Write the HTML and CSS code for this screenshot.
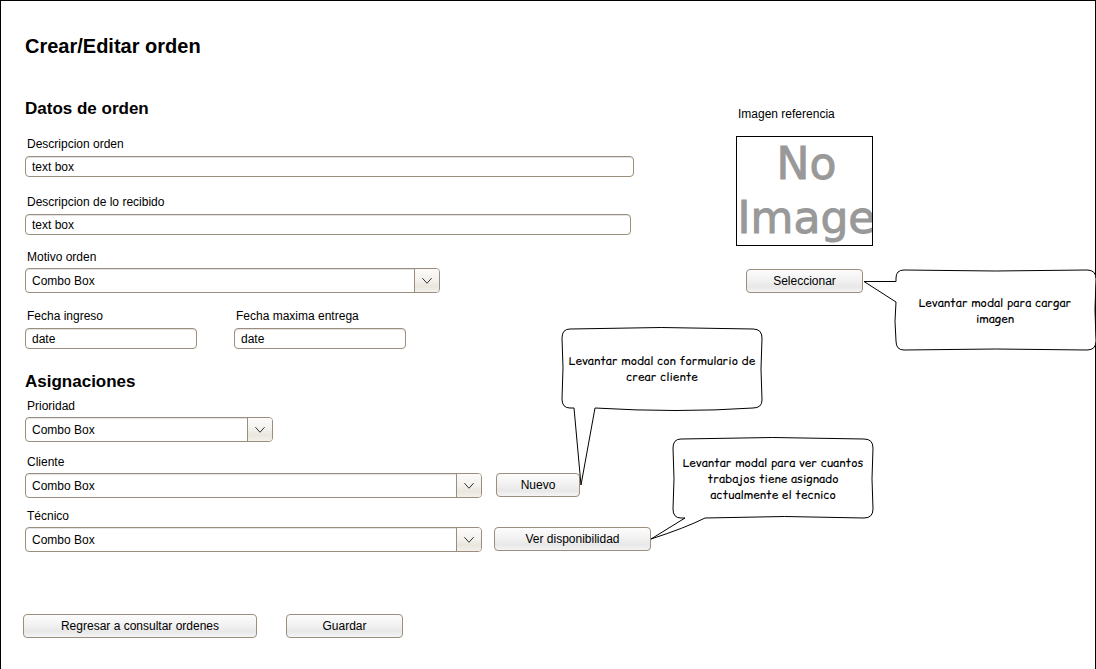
FILE: index.html
```html
<!DOCTYPE html>
<html lang="es">
<head>
<meta charset="utf-8">
<title>Crear/Editar orden</title>
<meta name="viewport" content="width=device-width, initial-scale=1">
<link rel="stylesheet" href="styles.css">
</head>
<body>
<main class="page">
  <h1 class="page-title">Crear/Editar orden</h1>
  <form class="order-form">
    <div class="columns">
      <div class="fields">
        <section class="order-data">
          <h2 class="section-title">Datos de orden</h2>
          <div class="field field-first">
            <label for="descripcion">Descripcion orden</label>
            <input class="text-input" id="descripcion" type="text" value="text box">
          </div>
          <div class="field field-received">
            <label for="recibido">Descripcion de lo recibido</label>
            <input class="text-input" id="recibido" type="text" value="text box">
          </div>
          <div class="field field-combo field-reason">
            <label for="motivo">Motivo orden</label>
            <span class="combo">
              <select id="motivo"><option>Combo Box</option></select>
              <svg class="combo-arrow" viewBox="0 0 25 25" aria-hidden="true"><path d="M7.500 10l5 5.500 5-5.500"/></svg>
            </span>
          </div>
          <div class="dates">
            <div class="field">
              <label for="ingreso">Fecha ingreso</label>
              <input class="text-input" id="ingreso" type="text" value="date">
            </div>
            <div class="field">
              <label for="entrega">Fecha maxima entrega</label>
              <input class="text-input" id="entrega" type="text" value="date">
            </div>
          </div>
        </section>
        <section class="assignments">
          <h2 class="section-title">Asignaciones</h2>
          <div class="field field-combo field-priority">
            <label for="prioridad">Prioridad</label>
            <span class="combo">
              <select id="prioridad"><option>Combo Box</option></select>
              <svg class="combo-arrow" viewBox="0 0 25 25" aria-hidden="true"><path d="M7.500 10l5 5.500 5-5.500"/></svg>
            </span>
          </div>
          <div class="field field-combo field-client">
            <label for="cliente">Cliente</label>
            <div class="action-row">
              <span class="combo">
                <select id="cliente"><option>Combo Box</option></select>
                <svg class="combo-arrow" viewBox="0 0 25 25" aria-hidden="true"><path d="M7.500 10l5 5.500 5-5.500"/></svg>
              </span>
              <div class="anchor">
                <button class="button button-small" type="button">Nuevo</button>
                <div class="callout callout-client">
                  <svg viewBox="0 0 204 160" aria-hidden="true"><path d="M10 2Q101-1 193 2Q202 2 202 11Q200 42 202 73Q202 81 193 81Q118 86 35 81L21 158L14 81H10Q2 81 2 72Q4 40 2 11Q2 2 10 2Z"/></svg>
                  <p>Levantar modal con formulario de<br>crear cliente</p>
                </div>
              </div>
            </div>
          </div>
          <div class="field field-combo field-technician">
            <label for="tecnico">Técnico</label>
            <div class="action-row">
              <span class="combo">
                <select id="tecnico"><option>Combo Box</option></select>
                <svg class="combo-arrow" viewBox="0 0 25 25" aria-hidden="true"><path d="M7.500 10l5 5.500 5-5.500"/></svg>
              </span>
              <div class="anchor">
                <button class="button button-wide" type="button">Ver disponibilidad</button>
                <div class="callout callout-technician">
                  <svg viewBox="0 0 224 104" aria-hidden="true"><path d="M30 2Q122-1 213 2Q222 2 222 11Q220 42 222 72Q222 81 213 81Q134 78 54 81Q34 91 0 102L34 81H30Q22 81 22 72Q24 42 22 11Q22 2 30 2Z"/></svg>
                  <p>Levantar modal para ver cuantos<br>trabajos tiene asignado<br>actualmente el tecnico</p>
                </div>
              </div>
            </div>
          </div>
        </section>
      </div>
      <aside class="reference">
        <span class="reference-label">Imagen referencia</span>
        <div class="placeholder"><span>No</span><span>Image</span></div>
        <div class="anchor">
          <button class="button button-medium" type="button">Seleccionar</button>
          <div class="callout callout-image">
            <svg viewBox="0 0 234 82" aria-hidden="true"><path d="M41 1Q132 3 224 1Q233 1 233 10Q231 40 233 72Q233 81 224 81Q132 79 41 81Q33 81 33 72Q31 52 33 33L1 12.500H33V9Q33 1 41 1Z"/></svg>
            <p>Levantar modal para cargar<br>imagen</p>
          </div>
        </div>
      </aside>
    </div>
    <div class="form-actions">
      <button class="button button-back" type="button">Regresar a consultar ordenes</button>
      <button class="button button-medium" type="submit">Guardar</button>
    </div>
  </form>
</main>
</body>
</html>
```
FILE: styles.css
```css
* {
  box-sizing: border-box;
}

body {
  margin: 0;
  background: #fff;
  color: #000;
  font: 12px/14px "Liberation Sans", Arial, sans-serif;
  overflow-x: hidden;
}

h1,
h2,
p {
  margin: 0;
}

.page {
  min-height: 100vh;
  padding: 33px 0 24px 22px;
  border: 1px solid #000;
  border-bottom: 0;
}

.page-title {
  padding-left: 2px;
  font-size: 20px;
  line-height: 24px;
}

.section-title {
  font-size: 17px;
  line-height: 20px;
}

.columns {
  display: grid;
  grid-template-columns: minmax(0, 629px) 1fr;
  column-gap: 82px;
  margin-top: 41px;
  padding-left: 2px;
}

.order-data {
  max-width: 609px;
}

.field {
  display: flex;
  flex-direction: column;
  gap: 5px;
}

.field-combo {
  gap: 4px;
}

.field label {
  padding-left: 2px;
}

.field-first {
  margin-top: 18px;
}

.field-received {
  max-width: 606px;
  margin-top: 18px;
}

.field-reason {
  max-width: 415px;
  margin-top: 15px;
}

.dates {
  display: grid;
  grid-template-columns: repeat(2, minmax(0, 172px));
  gap: 37px;
  margin-top: 16px;
}

.assignments {
  margin-top: 23px;
}

.field-priority {
  max-width: 248px;
  margin-top: 7px;
}

.field-client {
  margin-top: 13px;
}

.field-technician {
  margin-top: 11px;
}

.text-input {
  width: 100%;
  height: 21px;
  padding: 0 6px;
  border: 1px solid #9c8e7e;
  border-radius: 4px;
  background: #fff;
  color: #000;
  font: inherit;
  box-shadow: inset 0 1px 0 #e3e3e3;
}

.combo {
  position: relative;
  display: flex;
}

.combo select {
  width: 100%;
  height: 25px;
  padding: 0 30px 0 6px;
  border: 1px solid #9c8e7e;
  border-radius: 4px;
  appearance: none;
  background: #fff;
  color: #000;
  font: inherit;
  box-shadow: inset 0 1px 0 #e3e3e3;
}

.combo-arrow {
  position: absolute;
  top: 1px;
  right: 1px;
  width: 25px;
  height: 23px;
  border-left: 1px solid #9c8e7e;
  border-radius: 0 3px 3px 0;
  background: linear-gradient(#fcfbfa, #f3f1ec 50%, #e9e6dd 75%, #f3f1ec);
  fill: none;
  stroke: #222;
  pointer-events: none;
}

.action-row {
  display: flex;
  gap: 12px;
}

.field-client .action-row {
  gap: 14px;
}

.action-row .combo {
  flex: 0 1 457px;
}

.button {
  height: 24px;
  padding: 0 6px;
  border: 1px solid #9c8e7e;
  border-radius: 4px;
  background: linear-gradient(#fcfcfc, #f2f2f2 45%, #e8e8e8 75%, #f4f4f4);
  color: #000;
  font: inherit;
  white-space: nowrap;
}

.button-small {
  width: 84px;
}

.button-medium {
  width: 117px;
}

.button-wide {
  width: 157px;
}

.button-back {
  width: 234px;
}

.anchor {
  position: relative;
}

.action-row .anchor {
  height: 24px;
}

.reference {
  display: flex;
  flex-direction: column;
  align-items: center;
  width: 137px;
  padding-top: 8px;
}

.reference-label {
  align-self: stretch;
  padding-left: 2px;
}

.placeholder {
  display: flex;
  flex-direction: column;
  align-items: center;
  width: 137px;
  height: 110px;
  margin: 15px 0 23px;
  padding-left: 4px;
  border: 1px solid #000;
  overflow: hidden;
  font: 44px/54px "DejaVu Sans", Verdana, sans-serif;
}

.placeholder span {
  color: #999;
  -webkit-text-stroke: 1px #999;
}

.callout {
  position: absolute;
  z-index: 1;
  font: 12px/16px "Comic Relief", "Comic Sans MS", cursive;
  text-align: center;
  white-space: nowrap;
  pointer-events: none;
}

.callout svg {
  display: block;
  width: 100%;
  fill: #fff;
  stroke: #000;
}

.callout p {
  position: absolute;
  top: 0;
  right: 0;
  display: grid;
  place-content: center;
  width: 204px;
  height: 84px;
}

.callout-image {
  top: 0;
  left: 100%;
  width: 234px;
}

.callout-client {
  bottom: 10px;
  left: calc(100% - 20px);
  width: 204px;
}

.callout-technician {
  bottom: 10px;
  left: 100%;
  width: 224px;
}

.form-actions {
  display: flex;
  gap: 29px;
  margin-top: 62px;
}
```
